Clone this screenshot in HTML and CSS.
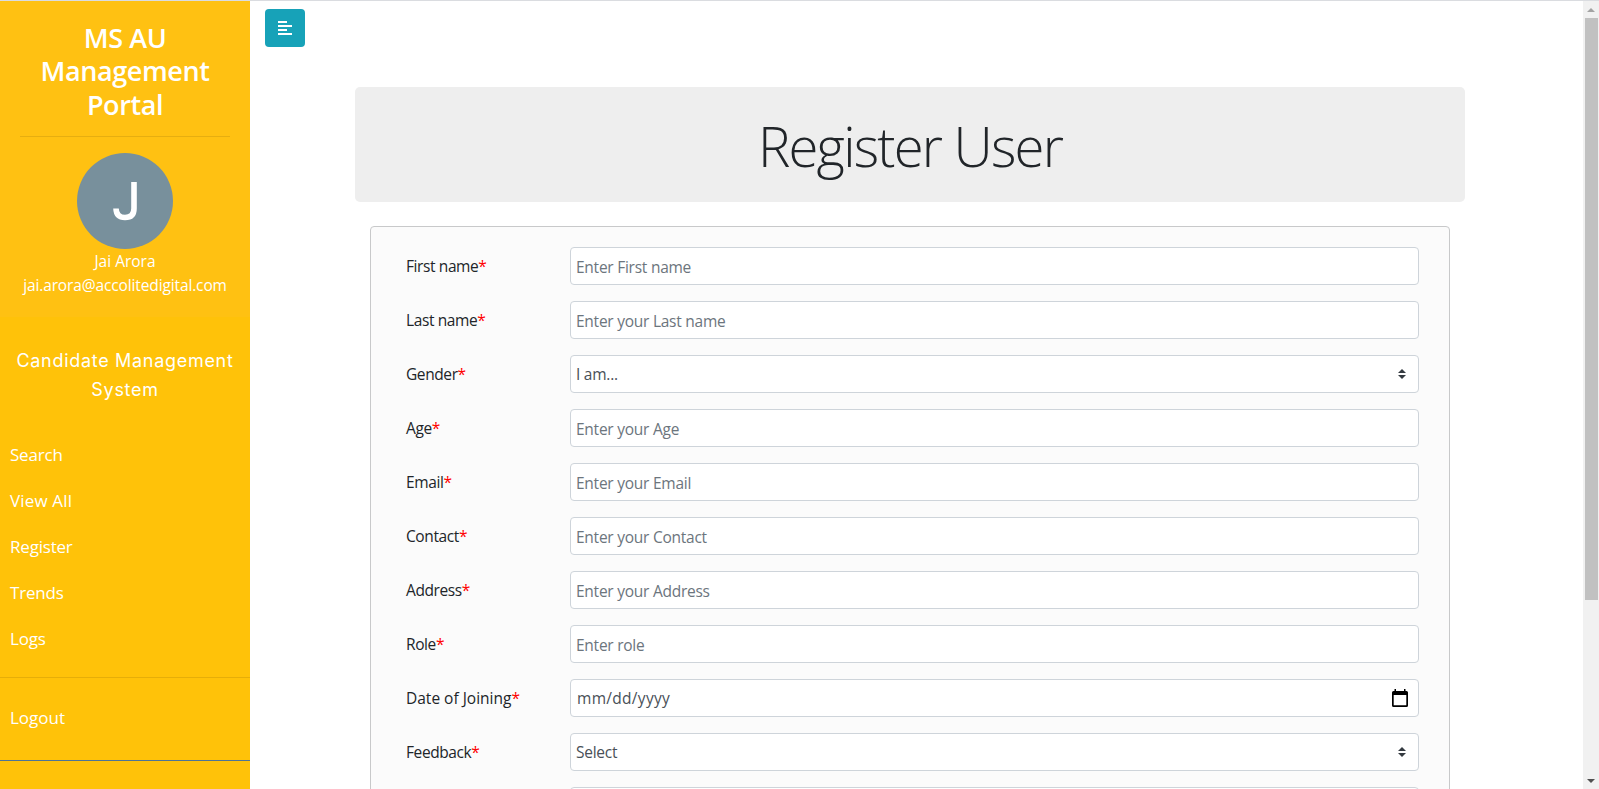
FILE: index.html
```html
<!DOCTYPE html>
<html lang="en">
<head>
<meta charset="utf-8">
<title>MS AU Management Portal</title>
<link rel="stylesheet" href="styles.css">
</head>
<body>
<div class="app">
  <nav class="sidebar">
    <header class="sidebar-header">
      <h3 class="portal-title">MS AU<br>Management<br>Portal</h3>
      <hr class="rule">
      <svg class="avatar" viewBox="0 0 96 96"><circle cx="48" cy="48" r="48" fill="#78909c"/><path d="M57 29v26.500q0 9-9 9-8.700 0-9-9" fill="none" stroke="#fff" stroke-width="5.600"/></svg>
      <p class="user-name">Jai Arora</p>
      <p class="user-mail">jai.arora@accolitedigital.com</p>
    </header>
    <p class="system-name">Candidate Management<br>System</p>
    <ul class="menu">
      <li>Search</li><li class="wide">View All</li><li>Register</li><li>Trends</li><li>Logs</li>
    </ul>
    <div class="logout">Logout</div>
  </nav>
  <main class="content">
    <button class="toggle" aria-label="Toggle sidebar"><svg width="14" height="16" viewBox="0 0 14 16" fill="#fff"><path d="M0 1h9v2H0zM0 5h14v2H0zM0 9h9v2H0zM0 13h14v2H0z"/></svg></button>
    <div class="container">
      <div class="banner"><h1 class="page-title">Register User</h1></div>
      <form class="card">
        <div class="row"><label class="label">First name<b>*</b></label><input class="field" placeholder="Enter First name"></div>
        <div class="row"><label class="label">Last name<b>*</b></label><input class="field" placeholder="Enter your Last name"></div>
        <div class="row"><label class="label">Gender<b>*</b></label><div class="field select"><span>I am...</span><svg width="8" height="10" viewBox="0 0 4 5" fill="#343a40"><path d="M2 0L0 2h4zm0 5L0 3h4z"/></svg></div></div>
        <div class="row"><label class="label">Age<b>*</b></label><input class="field" placeholder="Enter your Age"></div>
        <div class="row"><label class="label">Email<b>*</b></label><input class="field" placeholder="Enter your Email"></div>
        <div class="row"><label class="label">Contact<b>*</b></label><input class="field" placeholder="Enter your Contact"></div>
        <div class="row"><label class="label">Address<b>*</b></label><input class="field" placeholder="Enter your Address"></div>
        <div class="row"><label class="label">Role<b>*</b></label><input class="field" placeholder="Enter role"></div>
        <div class="row"><label class="label label-date">Date of Joining<b>*</b></label><div class="field date"><span>mm/dd/yyyy</span><svg width="16" height="18" viewBox="0 0 16 18"><path fill-rule="evenodd" d="M2.500 0h1.500v2h8V0h1.500v2H14.500Q16 2 16 3.500v13Q16 18 14.500 18h-13Q0 18 0 16.500v-13Q0 2 1.500 2h1zM1.700 6v10.300h12.600V6z"/></svg></div></div>
        <div class="row"><label class="label">Feedback<b>*</b></label><div class="field select"><span>Select</span><svg width="8" height="10" viewBox="0 0 4 5" fill="#343a40"><path d="M2 0L0 2h4zm0 5L0 3h4z"/></svg></div></div>
        <div class="row"><label class="label"></label><input class="field"></div>
      </form>
    </div>
  </main>
  <div class="scrollbar">
    <svg class="arrow" width="8" height="4" viewBox="0 0 8 4" fill="#a3a3a3"><path d="M4 0l4 4H0z"/></svg>
    <div class="thumb"></div>
    <svg class="arrow arrow-down" width="8" height="4" viewBox="0 0 8 4" fill="#505050"><path d="M4 4l4-4H0z"/></svg>
  </div>
</div>
</body>
</html>
```

FILE: styles.css
```css
* { box-sizing: border-box; }
body, h1, h3, p, ul { margin: 0; padding: 0; }
body {
  font-family: "Open Sans", "Noto Sans", sans-serif;
  font-size: 15.5px;
  line-height: 24px;
  color: #212529;
  background: #fff;
  overflow: hidden;
}
.app { display: flex; height: 789px; border-top: 1px solid #dadce0; overflow: hidden; }

.sidebar { width: 250px; flex: none; background: #ffc209; color: #fff; text-align: center; }
.sidebar-header { height: 316px; padding: 20px; background: #ffc112; }
.portal-title { font-size: 27px; font-weight: 600; line-height: 33.3px; height: 101px; letter-spacing: -0.4px; }
.rule { margin: 14px 0 16px; border: 0; border-top: 1px solid #e6ae10; }
.avatar { display: block; width: 96px; height: 96px; margin: 0 auto; }
.user-name { letter-spacing: 0; }
.user-mail { margin: 0 -10px; letter-spacing: -0.13px; white-space: nowrap; }
.system-name { padding-top: 29px; height: 115px; font-family: Inter, sans-serif; font-size: 18px; line-height: 29px; letter-spacing: 0.7px; white-space: nowrap; }
.menu { list-style: none; height: 246px; border-bottom: 1px solid #e6ae08; text-align: left; font-size: 17px; letter-spacing: -0.2px; }
.menu li { padding: 10px; height: 46px; line-height: 26px; }
.menu .wide { letter-spacing: 0.15px; }
.logout { height: 83px; padding: 27px 10px; line-height: 26px; border-bottom: 1px solid #4d7496; text-align: left; font-size: 17px; letter-spacing: 0; }

.content { flex: 1; padding: 8px 15px 0; }
.toggle { display: flex; align-items: center; justify-content: center; width: 40px; height: 38px; padding: 0; border: 0; border-radius: 4px; background: #17a2b8; }
.container { width: 1110px; margin: 40px 0 0 90px; }
.banner { height: 115px; border-radius: 5px; background: #eee; text-align: center; padding-top: 26px; }
.page-title { font-size: 54.5px; font-weight: 300; line-height: 67px; letter-spacing: -1.8px; }
.card { margin: 24px 15px 0; padding: 20px 30px 20px 35px; border: 1px solid #c8c9ca; border-radius: 4px; background: #fbfbfb; }
.row { display: flex; margin-bottom: 16px; }
.label { width: 164px; flex: none; padding-top: 7px; letter-spacing: -0.4px; }
.label-date { letter-spacing: 0; }
.label b { color: #f00; font-weight: 400; }
.field { flex: 1; height: 38px; padding: 2px 6px 0 5px; border: 1px solid #ced4da; border-radius: 4px; background: #fff; color: #495057; font: inherit; letter-spacing: -0.25px; }
.field::placeholder { color: #6c757d; opacity: 1; }
.select, .date { display: flex; align-items: center; justify-content: space-between; padding: 0 12px 0 5px; }
.date { padding: 0 10px 0 6px; letter-spacing: 0.3px; }

.scrollbar { width: 16px; flex: none; background: #f1f1f1; display: flex; flex-direction: column; align-items: center; padding: 7px 0 6px; }
.thumb { width: 13px; height: 582px; margin-top: 6px; background: #c1c1c1; }
.arrow-down { margin-top: auto; }
```
